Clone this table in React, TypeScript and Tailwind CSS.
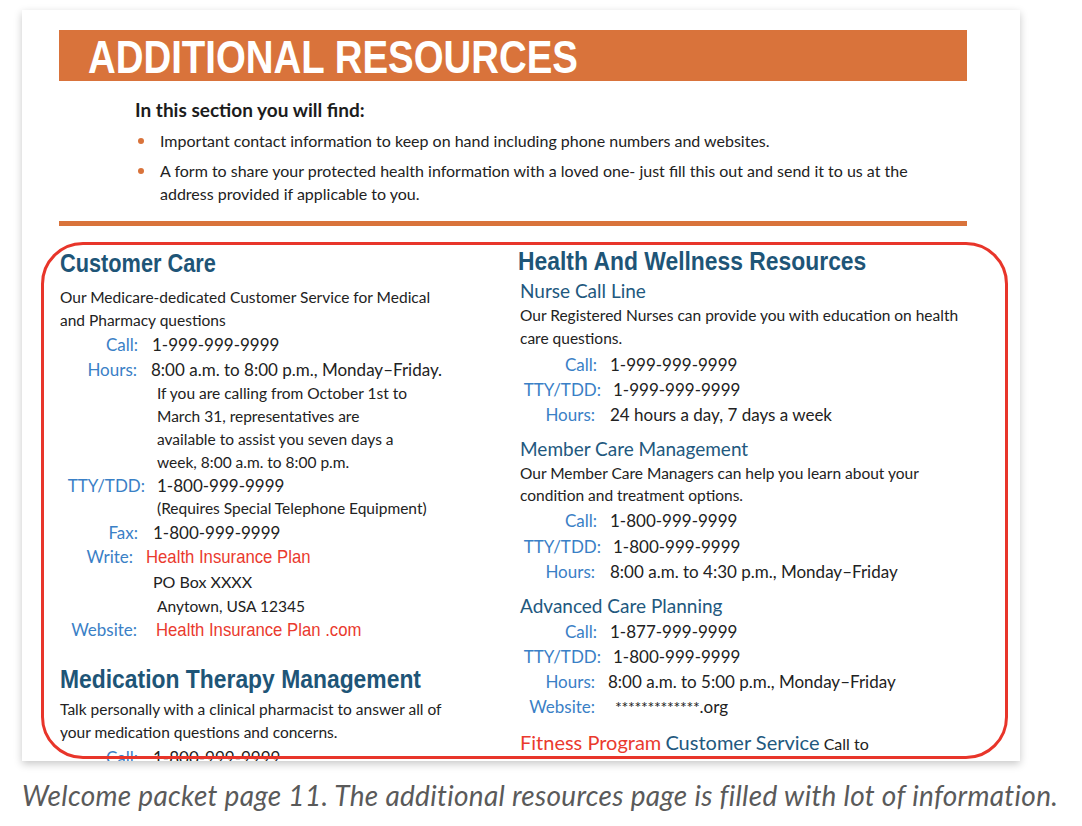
import React from "react";

const H2 =
  "font-['Liberation_Sans',Arial,sans-serif] font-bold text-[25px] text-[#1e5577] whitespace-nowrap origin-left";
const H3 = "text-[19px] text-[#22587e] whitespace-nowrap";
const LBL = "shrink-0 text-right text-[17px] text-[#3a80c6] whitespace-nowrap";
const VAL = "text-[17px] text-[#222222] whitespace-nowrap";
const TXT = "text-[15.5px] text-[#222222] whitespace-nowrap";
const RED =
  "inline-block origin-left scale-x-[0.88] font-['Liberation_Sans',Arial,sans-serif] text-[19px] text-[#ea3a2e] whitespace-nowrap";

export default function App() {
  return (
    <div className="relative w-[1082px] h-[826px] bg-white overflow-hidden font-['Lato',sans-serif]">
      <div className="pt-[10px] pl-[22px]">
        <div className="w-[998px] h-[751px] bg-white overflow-hidden flex flex-col shadow-[0_3px_8px_rgba(0,0,0,0.22)]">
          {/* Title bar */}
          <div className="mt-[20px] ml-[37px] w-[908px] h-[51px] shrink-0 bg-[#d9733b] flex items-center pl-[29px]">
            <h1 className="inline-block origin-left scale-x-[0.817] font-['Liberation_Sans',Arial,sans-serif] font-bold text-[47px] leading-none text-white whitespace-nowrap pt-[2px]">
              ADDITIONAL RESOURCES
            </h1>
          </div>

          {/* Intro */}
          <div className="ml-[113px] mt-[17px] flex flex-col">
            <p className="text-[19px] font-bold leading-[24px] text-[#1c1c1c]">
              In this section you will find:
            </p>
            <ul className="flex flex-col gap-[7px] mt-[7px]">
              <li className="flex">
                <span className="w-[25px] shrink-0 flex items-start pt-[9px] pl-[3px]">
                  <span className="w-[6px] h-[6px] rounded-full bg-[#d9733b]" />
                </span>
                <span className="text-[16px] leading-[23px] text-[#222]">
                  Important contact information to keep on hand including phone numbers and websites.
                </span>
              </li>
              <li className="flex">
                <span className="w-[25px] shrink-0 flex items-start pt-[9px] pl-[3px]">
                  <span className="w-[6px] h-[6px] rounded-full bg-[#d9733b]" />
                </span>
                <span className="text-[16px] leading-[23px] text-[#222]">
                  A form to share your protected health information with a loved one- just fill this out and send it to us at the
                  <br />
                  address provided if applicable to you.
                </span>
              </li>
            </ul>
          </div>

          {/* Divider */}
          <div className="mt-[16px] ml-[37px] w-[908px] h-[5px] shrink-0 bg-[#d9733b]" />

          {/* Columns */}
          <div className="mt-[19px] flex">
            {/* Left column */}
            <div className="w-[496px] pl-[38px] flex flex-col shrink-0">
              <h2 className={H2 + " scale-x-[0.87] leading-[36px] mb-[5px]"}>Customer Care</h2>
              <p className={TXT + " leading-[23px]"}>
                Our Medicare-dedicated Customer Service for Medical
                <br />
                and Pharmacy questions
              </p>
              <div className="flex items-center h-[25px]">
                <span className={LBL + " w-[78px]"}>Call:</span>
                <span className={VAL + " ml-[14px]"}>1-999-999-9999</span>
              </div>
              <div className="flex items-center h-[25px]">
                <span className={LBL + " w-[77px]"}>Hours:</span>
                <span className={VAL + " ml-[14px]"}>8:00 a.m. to 8:00 p.m., Monday–Friday.</span>
              </div>
              <p className={TXT + " pl-[97px] leading-[23px]"}>
                If you are calling from October 1st to
                <br />
                March 31, representatives are
                <br />
                available to assist you seven days a
                <br />
                week, 8:00 a.m. to 8:00 p.m.
              </p>
              <div className="flex items-center h-[23px]">
                <span className={LBL + " w-[85px]"}>TTY/TDD:</span>
                <span className={VAL + " ml-[12px]"}>1-800-999-9999</span>
              </div>
              <p className={TXT + " pl-[97px] leading-[23px]"}>(Requires Special Telephone Equipment)</p>
              <div className="flex items-center h-[25px]">
                <span className={LBL + " w-[78px]"}>Fax:</span>
                <span className={VAL + " ml-[15px]"}>1-800-999-9999</span>
              </div>
              <div className="flex items-center h-[24px]">
                <span className={LBL + " w-[73px]"}>Write:</span>
                <span className="ml-[13px]">
                  <span className={RED}>Health Insurance Plan</span>
                </span>
              </div>
              <p className="text-[16px] text-[#222] whitespace-nowrap pl-[93px] leading-[25px]">PO Box XXXX</p>
              <p className={TXT + " pl-[97px] leading-[24px]"}>Anytown, USA 12345</p>
              <div className="flex items-center h-[24px]">
                <span className={LBL + " w-[77px]"}>Website:</span>
                <span className="ml-[19px]">
                  <span className={RED}>Health Insurance Plan .com</span>
                </span>
              </div>
              <h2 className={H2 + " scale-x-[0.915] mt-[18px] leading-[38px]"}>Medication Therapy Management</h2>
              <p className={TXT + " leading-[23px]"}>
                Talk personally with a clinical pharmacist to answer all of
                <br />
                your medication questions and concerns.
              </p>
              <div className="flex items-center h-[28px]">
                <span className={LBL + " w-[78px]"}>Call:</span>
                <span className={VAL + " ml-[15px]"}>1-800-999-9999</span>
              </div>
            </div>

            {/* Right column */}
            <div className="flex flex-col">
              <h2 className={H2 + " scale-x-[0.915] leading-[32px]"}>Health And Wellness Resources</h2>
              <h3 className={H3 + " pl-[2px] leading-[27px]"}>Nurse Call Line</h3>
              <p className={TXT + " pl-[2px] leading-[23px] mb-[2px]"}>
                Our Registered Nurses can provide you with education on health
                <br />
                care questions.
              </p>
              <div className="flex items-center h-[25px]">
                <span className={LBL + " w-[79px]"}>Call:</span>
                <span className={VAL + " ml-[13px]"}>1-999-999-9999</span>
              </div>
              <div className="flex items-center h-[25px]">
                <span className={LBL + " w-[83px]"}>TTY/TDD:</span>
                <span className={VAL + " ml-[12px]"}>1-999-999-9999</span>
              </div>
              <div className="flex items-center h-[25px]">
                <span className={LBL + " w-[77px]"}>Hours:</span>
                <span className={VAL + " ml-[15px]"}>24 hours a day, 7 days a week</span>
              </div>

              <h3 className={H3 + " pl-[2px] mt-[8px] leading-[27px]"}>Member Care Management</h3>
              <p className={TXT + " pl-[2px] leading-[22px] mb-[2px]"}>
                Our Member Care Managers can help you learn about your
                <br />
                condition and treatment options.
              </p>
              <div className="flex items-center h-[26px]">
                <span className={LBL + " w-[79px]"}>Call:</span>
                <span className={VAL + " ml-[13px]"}>1-800-999-9999</span>
              </div>
              <div className="flex items-center h-[25px]">
                <span className={LBL + " w-[83px]"}>TTY/TDD:</span>
                <span className={VAL + " ml-[12px]"}>1-800-999-9999</span>
              </div>
              <div className="flex items-center h-[25px]">
                <span className={LBL + " w-[77px]"}>Hours:</span>
                <span className={VAL + " ml-[15px]"}>8:00 a.m. to 4:30 p.m., Monday–Friday</span>
              </div>

              <h3 className={H3 + " pl-[2px] mt-[8px] leading-[27px]"}>Advanced Care Planning</h3>
              <div className="flex items-center h-[25px]">
                <span className={LBL + " w-[79px]"}>Call:</span>
                <span className={VAL + " ml-[13px]"}>1-877-999-9999</span>
              </div>
              <div className="flex items-center h-[25px]">
                <span className={LBL + " w-[83px]"}>TTY/TDD:</span>
                <span className={VAL + " ml-[12px]"}>1-800-999-9999</span>
              </div>
              <div className="flex items-center h-[25px]">
                <span className={LBL + " w-[77px]"}>Hours:</span>
                <span className={VAL + " ml-[13px]"}>8:00 a.m. to 5:00 p.m., Monday–Friday</span>
              </div>
              <div className="flex items-center h-[25px]">
                <span className={LBL + " w-[77px]"}>Website:</span>
                <span className={VAL + " ml-[20px]"}>
                  <span className="text-[16px] tracking-[-0.3px]">*************</span>.org
                </span>
              </div>

              <p className="pl-[2px] mt-[10px] leading-[26px] whitespace-nowrap">
                <span className="text-[20px] text-[#ea3a2e]">Fitness Program</span>{" "}
                <span className="text-[20px] text-[#22587e]">Customer Service</span>{" "}
                <span className="text-[16px] text-[#222]">Call to</span>
              </p>
              <p className={TXT + " pl-[2px] leading-[25px]"}>
                enroll in the <span className="text-[#ea3a2e]">*</span>Fitness Program and learn about benefits available to
              </p>
            </div>
          </div>
        </div>
      </div>

      {/* Caption */}
      <p className="mt-[17px] pl-[22px] text-[28px] tracking-[0.3px] leading-[34px] italic text-[#5a5a5a] whitespace-nowrap">
        Welcome packet page 11. The additional resources page is filled with lot of information.
      </p>

      {/* Red annotation outline */}
      <div className="absolute left-[41px] top-[242px] w-[967px] h-[517px] rounded-[42px] border-[3.5px] border-[#e8352a] pointer-events-none" />
    </div>
  );
}
